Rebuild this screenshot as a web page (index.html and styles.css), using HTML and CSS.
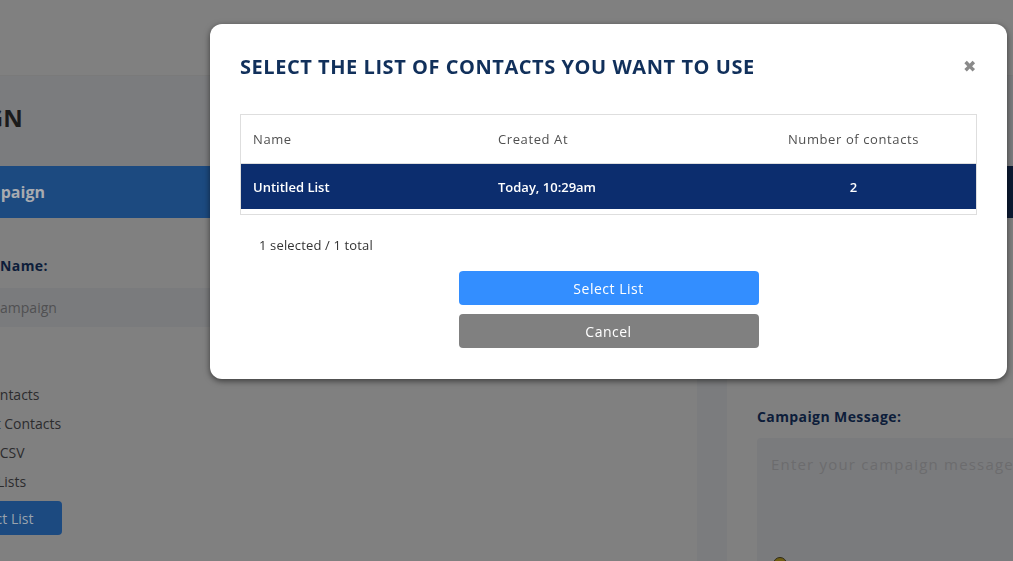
FILE: index.html
```html
<!DOCTYPE html>
<html lang="en">
<head>
<meta charset="utf-8">
<title>Create Campaign</title>
<link rel="stylesheet" href="styles.css">
</head>
<body>
<div class="topbar"></div>
<div class="main">
  <section class="left">
    <h1 class="page-title">CREATE CAMPAIGN</h1>
    <div class="card">
      <div class="card-head blue"><span class="head-text">Create Campaign</span></div>
      <div class="card-body">
        <div class="label">Campaign Name:</div>
        <div class="input">My Campaign</div>
        <div class="options">
          <div class="opt">All Contacts</div>
          <div class="opt opt-b">Select Contacts</div>
          <div class="opt opt-c">Upload CSV</div>
          <div class="opt opt-d">Contact Lists</div>
        </div>
        <div class="bg-btn">Select List</div>
      </div>
    </div>
  </section>
  <section class="right">
    <div class="card">
      <div class="card-head dark"></div>
      <div class="card-body rbody">
        <div class="label">Campaign Message:</div>
        <div class="textarea">
          <span class="ph">Enter your campaign message here...</span>
          <span class="emoji"></span>
        </div>
      </div>
    </div>
  </section>
</div>

<div class="modal">
  <div class="modal-head">
    <h2 class="modal-title">SELECT THE LIST OF CONTACTS YOU WANT TO USE</h2>
    <span class="close">&#x2716;</span>
  </div>
  <div class="table">
    <div class="row thead">
      <div class="cell">Name</div>
      <div class="cell">Created At</div>
      <div class="cell center">Number of contacts</div>
    </div>
    <div class="row selected">
      <div class="cell">Untitled List</div>
      <div class="cell">Today, 10:29am</div>
      <div class="cell center">2</div>
    </div>
  </div>
  <div class="count">1 selected / 1 total</div>
  <div class="actions">
    <button class="btn primary">Select List</button>
    <button class="btn secondary">Cancel</button>
  </div>
</div>
</body>
</html>
```
FILE: styles.css
```css
html, body {
  margin: 0;
  padding: 0;
}
body {
  width: 1013px;
  height: 561px;
  overflow: hidden;
  background: #7b7c7e;
  font-family: "Open Sans", "Liberation Sans", sans-serif;
  color: #2e2e2e;
}
.topbar {
  height: 75px;
  background: #808080;
  border-bottom: 1px solid #7a7a7a;
}
.main {
  display: flex;
  gap: 30px;
  margin-left: -150px;
}
.left {
  width: 847px;
  flex: none;
}
.right {
  width: 400px;
  flex: none;
  padding-top: 90px;
}
.page-title {
  margin: 0 0 0 -53px;
  height: 90px;
  box-sizing: border-box;
  padding: 27px 0 0 0;
  font-size: 24px;
  line-height: 30px;
  font-weight: 700;
  color: #1b1b1b;
}
.card-head {
  height: 52px;
  display: flex;
  align-items: center;
}
.card-head.blue {
  background: #1c4a80;
}
.card-head.dark {
  background: #0b1a33;
}
.head-text {
  font-size: 16px;
  font-weight: 700;
  color: #a8abb0;
  margin-left: 58px;
}
.card-body {
  background: #808080;
  height: 400px;
  padding-top: 38px;
  box-sizing: border-box;
}
.label {
  font-size: 14px;
  font-weight: 700;
  line-height: 20px;
  color: #0d1d3a;
  margin-left: 73px;
  letter-spacing: 0.4px;
}
.input {
  margin-top: 12px;
  height: 39px;
  background: #7a7b7d;
  border-radius: 4px;
  display: flex;
  align-items: center;
  padding-left: 118px;
  font-size: 14px;
  color: #505052;
}
.options {
  margin-top: 58px;
  display: flex;
  flex-direction: column;
  gap: 9px;
  font-size: 14px;
  line-height: 20px;
  color: #2c2c2e;
}
.opt { margin-left: 113px; }
.opt-b { margin-left: 112px; }
.opt-c { margin-left: 99px; }
.opt-d { margin-left: 93px; }
.bg-btn {
  margin-top: 9px;
  margin-left: 100px;
  width: 112px;
  height: 34px;
  background: #1c4a80;
  border-radius: 4px;
  color: #9aa3ad;
  font-size: 14px;
  display: flex;
  align-items: center;
  justify-content: center;
  padding-right: 10px;
  box-sizing: border-box;
}
.rbody {
  padding-top: 189px;
}
.rbody .label {
  margin-left: 30px;
}
.textarea {
  margin: 11px 0 0 30px;
  height: 200px;
  background: #7a7b7d;
  border-radius: 4px;
  padding: 15px 14px;
  box-sizing: border-box;
  position: relative;
}
.ph {
  font-size: 15px;
  letter-spacing: 1.2px;
  color: #6c6c6e;
  white-space: nowrap;
}
.emoji {
  position: absolute;
  left: 16px;
  top: 119px;
  width: 12px;
  height: 12px;
  border-radius: 50%;
  background: #6e5d12;
  border: 1px solid #2e2a18;
}

/* Modal */
.modal {
  position: fixed;
  left: 210px;
  top: 24px;
  width: 797px;
  height: 355px;
  box-sizing: border-box;
  background: #ffffff;
  border-radius: 12px;
  box-shadow: 0 2px 6px rgba(0, 0, 0, 0.55);
  padding: 27px 30px 0 30px;
}
.modal-head {
  display: flex;
  justify-content: space-between;
  align-items: center;
  height: 30px;
}
.modal-title {
  margin: 0;
  font-size: 20px;
  font-weight: 700;
  color: #11305b;
  letter-spacing: 0.55px;
}
.close {
  font-size: 16px;
  color: #8a8a8a;
  margin-right: 1px;
}
.table {
  margin-top: 33px;
  border: 1px solid #dedede;
  padding-bottom: 5px;
}
.row {
  display: grid;
  grid-template-columns: 1fr 1fr 1fr;
  align-items: center;
  font-size: 13px;
}
.thead {
  height: 48px;
  border-bottom: 1px solid #dedede;
  color: #505050;
  letter-spacing: 0.6px;
}
.selected {
  height: 45px;
  background: #0c2d6e;
  color: #ffffff;
  font-weight: 600;
}
.cell {
  padding-left: 12px;
}
.cell.center {
  text-align: center;
  padding-left: 0;
}
.count {
  margin-top: 20px;
  margin-left: 19px;
  font-size: 13px;
  line-height: 20px;
  color: #333333;
  letter-spacing: 0.15px;
}
.actions {
  margin-top: 16px;
  display: flex;
  flex-direction: column;
  align-items: center;
  gap: 9px;
}
.btn {
  width: 300px;
  height: 34px;
  border: none;
  border-radius: 4px;
  color: #ffffff;
  font-family: inherit;
  font-size: 14px;
  font-weight: 500;
  letter-spacing: 0.5px;
}
.btn.primary { background: #338eff; }
.btn.secondary { background: #808080; }
```
